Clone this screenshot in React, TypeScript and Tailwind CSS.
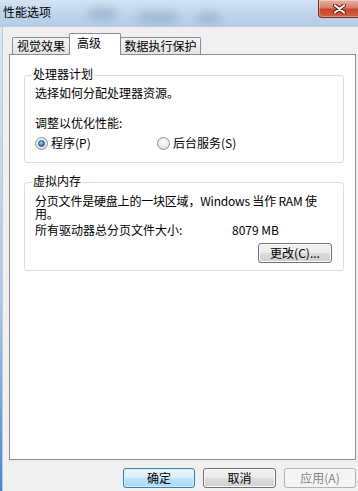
import type { ReactNode } from "react";

// Win7 style "性能选项" dialog, 高级 tab

const Radio = ({ checked }: { checked?: boolean }) => (
  <span className="flex h-[13px] w-[13px] shrink-0 items-center justify-center rounded-full border border-[#8e8f8f] bg-[radial-gradient(circle_at_50%_35%,#ffffff,#d6d6d6)]">
    {checked && (
      <span className="h-[7px] w-[7px] rounded-full border border-[#1f4f86] bg-[radial-gradient(circle_at_40%_35%,#9ad4ff,#2a6fbf_70%)]" />
    )}
  </span>
);

const Group = ({
  label,
  className,
  children,
}: {
  label: string;
  className: string;
  children: ReactNode;
}) => (
  <div
    className={`relative ml-[14px] w-[320px] rounded-[3px] border border-[#d5dfe5] pl-[10px] pr-[11px] ${className}`}
  >
    <span className="absolute -top-[9px] left-[7px] bg-white px-[1px] leading-[14px]">
      {label}
    </span>
    {children}
  </div>
);

const WinButton = ({
  children,
  variant = "normal",
  className = "",
}: {
  children: ReactNode;
  variant?: "normal" | "default" | "disabled";
  className?: string;
}) => {
  const look =
    variant === "default"
      ? "border-[#3c7fb1] bg-[linear-gradient(to_bottom,#eaf6fd_0%,#d9f0fc_50%,#bee6fd_50%,#a7d9f5_100%)] shadow-[inset_0_0_0_1px_#d7eefb]"
      : variant === "disabled"
        ? "border-[#adb2b5] bg-[#f4f4f4] text-[#838383]"
        : "border-[#707070] bg-[linear-gradient(to_bottom,#f2f2f2_0%,#ebebeb_50%,#dddddd_50%,#cfcfcf_100%)] shadow-[inset_0_0_0_1px_#fbfbfb]";
  return (
    <button
      className={`flex h-[20px] items-center justify-center rounded-[3px] border leading-[14px] ${look} ${className}`}
    >
      {children}
    </button>
  );
};

const TitleBar = () => (
  <div className="relative flex h-[27px] shrink-0 items-start justify-between overflow-hidden bg-[linear-gradient(to_bottom,#d3e3f3,#bcd2ea_60%,#b6cde7)]">
    <div className="absolute left-[88px] top-[8px] h-[12px] w-[28px] rounded-full bg-[#8ea7c3] opacity-60 blur-[4px]" />
    <div className="absolute left-[138px] top-[12px] h-[12px] w-[40px] rounded-full bg-[#91a9c5] opacity-60 blur-[4px]" />
    <div className="absolute left-[197px] top-[13px] h-[11px] w-[24px] rounded-full bg-[#90a8c4] opacity-60 blur-[4px]" />
    <span className="relative pl-[3px] pt-[5px] leading-[14px] text-black">性能选项</span>
    <div className="relative -mr-[6px] flex h-[18px] w-[46px] shrink-0 items-center justify-center rounded-b-[4px] border border-t-0 border-[#7a2a1e] bg-[linear-gradient(to_bottom,#eab3a5_0%,#d9806c_45%,#c7442d_55%,#d06245_100%)] shadow-[inset_0_0_0_1px_rgba(255,255,255,0.35)]">
      <svg width="13" height="10" viewBox="0 0 13 10" className="-ml-[3px]">
        <path d="M2 1.5 L11 8.5 M11 1.5 L2 8.5" stroke="#5a1a10" strokeWidth="4" strokeLinecap="round" />
        <path d="M2 1.5 L11 8.5 M11 1.5 L2 8.5" stroke="#ffffff" strokeWidth="2.2" strokeLinecap="round" />
      </svg>
    </div>
  </div>
);

export default function App() {
  return (
    <div className="flex h-[491px] w-[358px] flex-col overflow-hidden bg-[#f0f0f0] font-['Noto_Sans_CJK_SC','Liberation_Sans',sans-serif] text-[12px] text-black">
      <TitleBar />
      <div className="flex flex-1">
        <div className="w-[2px] bg-[linear-gradient(to_bottom,#dbe8f4,#a9c8e8_60%,#3f89d2)]" />
        <div className="w-[1px] bg-[#c3ccd6]" />
        <div className="flex-1 pt-[6px]">
          {/* Tabs */}
          <div className="flex h-[21px] items-end pl-[9px]">
            <div className="flex h-[17px] w-[58px] items-center justify-center rounded-t-[2px] border border-b-0 border-[#898c95] bg-[linear-gradient(to_bottom,#f6f6f6,#e3e3e3)] leading-[14px]">
              视觉效果
            </div>
            <div className="relative z-10 -mb-[1px] -ml-[1px] flex h-[22px] w-[52px] items-start rounded-t-[2px] border border-b-0 border-[#898c95] bg-white pl-[7px] pt-[2px] leading-[14px]">
              高级
            </div>
            <div className="-ml-[1px] flex h-[17px] w-[81px] items-center justify-center rounded-t-[2px] border border-b-0 border-[#898c95] bg-[linear-gradient(to_bottom,#f6f6f6,#e3e3e3)] leading-[14px]">
              数据执行保护
            </div>
          </div>

          {/* Tab panel */}
          <div className="ml-[6px] h-[406px] w-[347px] border border-[#898c95] bg-white">
            <Group label="处理器计划" className="mt-[20px] pb-[12px] pt-[10px]">
              <p className="leading-[14px]">选择如何分配处理器资源。</p>
              <p className="mt-[16px] leading-[14px]">调整以优化性能:</p>
              <div className="mt-[6px] grid grid-cols-[122px_1fr] leading-[14px]">
                <label className="flex items-center gap-[3px]">
                  <Radio checked />
                  <span>程序(P)</span>
                </label>
                <label className="flex items-center gap-[3px]">
                  <Radio />
                  <span>后台服务(S)</span>
                </label>
              </div>
            </Group>

            <Group label="虚拟内存" className="mt-[19px] pb-[7px] pt-[11px]">
              <p className="leading-[13px] tracking-[-0.2px]">
                <span className="block whitespace-nowrap">
                  分页文件是硬盘上的一块区域，Windows 当作 RAM 使
                </span>
                <span className="block whitespace-nowrap">用。</span>
              </p>
              <div className="mt-[3px] flex leading-[14px]">
                <span className="w-[197px]">所有驱动器总分页文件大小:</span>
                <span>8079 MB</span>
              </div>
              <div className="mt-[6px] flex justify-end">
                <WinButton className="w-[74px]">更改(C)...</WinButton>
              </div>
            </Group>
          </div>

          {/* Dialog buttons */}
          <div className="ml-[6px] mt-[8px] flex w-[347px] justify-end gap-[8px]">
            <WinButton variant="default" className="w-[72px]">
              确定
            </WinButton>
            <WinButton className="w-[73px]">取消</WinButton>
            <WinButton variant="disabled" className="w-[72px]">
              应用(A)
            </WinButton>
          </div>
        </div>
      </div>
    </div>
  );
}
